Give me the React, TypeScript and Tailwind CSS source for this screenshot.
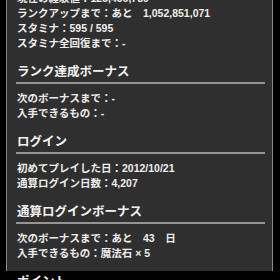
const rowFont = {
  fontFamily: '"Liberation Sans", "Noto Sans CJK JP", sans-serif',
};

function Row({ children }: { children: React.ReactNode }) {
  return <div className="h-[15px] leading-[15px] text-[10.5px] font-bold text-[#eeeeee] whitespace-nowrap">{children}</div>;
}

function Heading({ title }: { title: string }) {
  return (
    <div className="mr-[7px] ml-[-1px] border-b-2 border-[#959595] pb-[2px] pl-[1px]">
      <div className="h-[16px] leading-[16px] text-[12.5px] font-bold text-[#f2f2f2] whitespace-nowrap">{title}</div>
    </div>
  );
}

function Section({ title, rows }: { title: string; rows: React.ReactNode[] }) {
  return (
    <div className="mt-[13px]">
      <Heading title={title} />
      <div className="mt-[7px]">
        {rows.map((r, i) => (
          <Row key={i}>{r}</Row>
        ))}
      </div>
    </div>
  );
}

export default function App() {
  return (
    <div className="w-[280px] h-[280px] overflow-hidden bg-black" style={rowFont}>
      <div className="ml-[6px] w-[267px] h-full border-x border-[#8a8a8a] bg-[#2f2f2f] pl-[10px]">
        <div className="mt-[-9px]">
          <Row>現在の経験値：123,456,789</Row>
          <Row>ランクアップまで：あと　1,052,851,071</Row>
          <Row>スタミナ：595 / 595</Row>
          <Row>スタミナ全回復まで：-</Row>
        </div>
        <Section title="ランク達成ボーナス" rows={["次のボーナスまで：-", "入手できるもの：-"]} />
        <Section
          title="ログイン"
          rows={["初めてプレイした日：2012/10/21", "通算ログイン日数：4,207"]}
        />
        <Section
          title="通算ログインボーナス"
          rows={["次のボーナスまで：あと　43　日", "入手できるもの：魔法石 × 5"]}
        />
        <Section title="ポイント" rows={[]} />
      </div>
    </div>
  );
}
